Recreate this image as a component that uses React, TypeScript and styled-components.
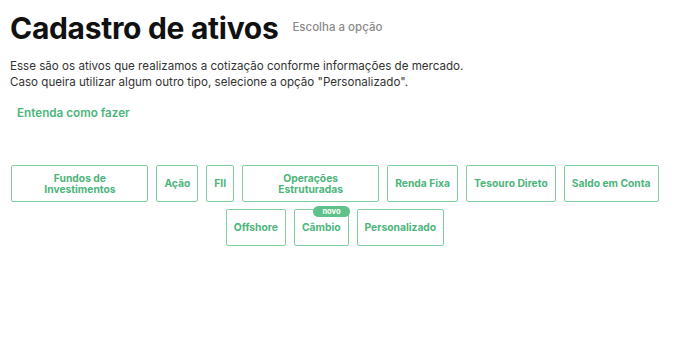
import React from "react";
import styled, { createGlobalStyle } from "styled-components";

const GlobalStyle = createGlobalStyle`
	body {
		margin: 0;
		background: #ffffff;
		font-family: "Inter", "Noto Sans", sans-serif;
	}
`;

const ativos = [
	"Fundos de Investimentos",
	"Ação",
	"FII",
	"Operações Estruturadas",
	"Renda Fixa",
	"Tesouro Direto",
	"Saldo em Conta",
	"Offshore",
	"Câmbio",
	"Personalizado",
];

export default function App() {
	return (
		<Page>
			<GlobalStyle />
			<Header>
				<Title>Cadastro de ativos</Title>
				<Subtitle>Escolha a opção</Subtitle>
			</Header>
			<Description>
				Esse são os ativos que realizamos a cotização conforme informações de mercado.
				<br />
				Caso queira utilizar algum outro tipo, selecione a opção "Personalizado".
			</Description>
			<HelpLink>Entenda como fazer</HelpLink>
			<Options>
				{ativos.map((nome) => (
					<Option key={nome}>
						{nome}
						{nome === "Câmbio" && <Badge>novo</Badge>}
					</Option>
				))}
			</Options>
		</Page>
	);
}

const Page = styled.div`
	padding: 10px 10px;
	width: 650px;
`;

const Header = styled.div`
	display: flex;
	align-items: baseline;
	gap: 14px;
`;

const Title = styled.h1`
	margin: 0;
	font-size: 30px;
	font-weight: 700;
	color: #111111;
	letter-spacing: -0.3px;
`;

const Subtitle = styled.span`
	font-size: 11.5px;
	color: #8a8a8a;
	font-weight: 500;
	position: relative;
	top: -8px;
`;

const Description = styled.p`
	margin: 12px 0 0;
	font-size: 11.6px;
	line-height: 16px;
	color: #333333;
`;

const HelpLink = styled.a`
	display: block;
	margin: 16px 0 0 7px;
	font-size: 11.7px;
	font-weight: 600;
	color: #4db57c;
	cursor: pointer;
`;

const Options = styled.div`
	display: flex;
	flex-wrap: wrap;
	justify-content: center;
	gap: 7px 8px;
	margin: 45px -5px 0;
`;

const Option = styled.button`
	position: relative;
	height: 37px;
	max-width: 137px;
	padding: 0 7px;
	background: #ffffff;
	border: 1px solid #7fcf9f;
	border-radius: 2px;
	font-family: "Inter", "Noto Sans", sans-serif;
	font-size: 10.3px;
	font-weight: 700;
	line-height: 11px;
	color: #4db57c;
	cursor: pointer;
	&:nth-child(1),
	&:nth-child(4) {
		width: 137px;
	}
`;

const Badge = styled.span`
	position: absolute;
	top: -4px;
	right: -2px;
	padding: 2px 9px;
	background: #5fc28a;
	color: #ffffff;
	font-size: 7.5px;
	line-height: 7px;
	font-weight: 700;
	border-radius: 6px;
`;
